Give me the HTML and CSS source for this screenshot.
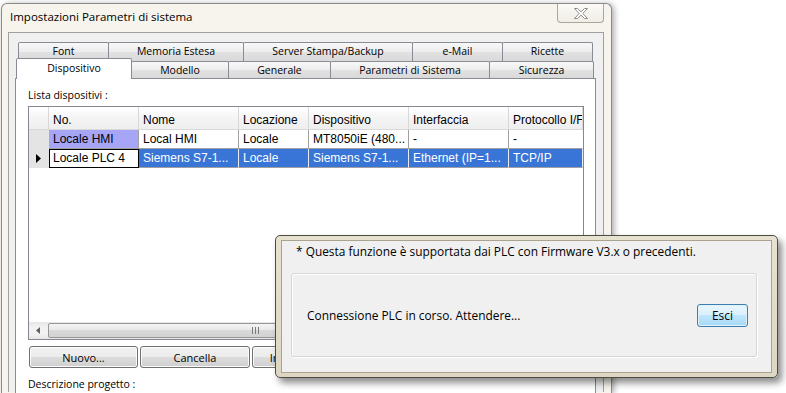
FILE: index.html
```html
<!DOCTYPE html>
<html lang="it">
<head>
  <meta charset="UTF-8">
  <title>Impostazioni Parametri di sistema</title>
  <link rel="stylesheet" href="styles.css">
</head>
<body>

  <div class="window">
    <div class="titlebar">
      <span class="title">Impostazioni Parametri di sistema</span>
      <div class="close">
        <svg width="14" height="11" viewBox="0 0 14 11">
          <polygon points="0.5,0.5 3.5,0.5 7,3.8 10.5,0.5 13.5,0.5 8.8,5.5 13.5,10.5 10.5,10.5 7,7.2 3.5,10.5 0.5,10.5 5.2,5.5" fill="#fff" stroke="#8c8c8c" stroke-width="1"/>
        </svg>
      </div>
    </div>

    <div class="client">
      <div class="tabctl">
        <div class="tabrow back">
          <div class="tab" style="width:91px">Font</div>
          <div class="tab" style="width:136px">Memoria Estesa</div>
          <div class="tab" style="width:170px">Server Stampa/Backup</div>
          <div class="tab" style="width:91px">e-Mail</div>
          <div class="tab" style="width:91px">Ricette</div>
        </div>
        <div class="tabrow front">
          <div class="tab sel" style="width:116px">Dispositivo</div>
          <div class="tab" style="width:98px">Modello</div>
          <div class="tab" style="width:103px">Generale</div>
          <div class="tab" style="width:160px">Parametri di Sistema</div>
          <div class="tab" style="width:105px">Sicurezza</div>
        </div>

        <div class="panel">
          <div class="label">Lista dispositivi :</div>

          <div class="grid">
            <div class="row head">
              <div class="cell rh"></div>
              <div class="cell">No.</div>
              <div class="cell">Nome</div>
              <div class="cell">Locazione</div>
              <div class="cell">Dispositivo</div>
              <div class="cell">Interfaccia</div>
              <div class="cell last">Protocollo I/F</div>
            </div>
            <div class="row">
              <div class="cell rh"></div>
              <div class="cell hmi">Locale HMI</div>
              <div class="cell">Local HMI</div>
              <div class="cell">Locale</div>
              <div class="cell">MT8050iE (480...</div>
              <div class="cell">-</div>
              <div class="cell last">-</div>
            </div>
            <div class="row selected">
              <div class="cell rh">
                <svg width="5" height="9" viewBox="0 0 5 9"><polygon points="0,0 5,4.5 0,9" fill="#000"/></svg>
              </div>
              <div class="cell current">Locale PLC 4</div>
              <div class="cell">Siemens S7-1...</div>
              <div class="cell">Locale</div>
              <div class="cell">Siemens S7-1...</div>
              <div class="cell">Ethernet (IP=1...</div>
              <div class="cell last">TCP/IP</div>
            </div>
            <div class="empty"></div>
            <div class="hscroll">
              <div class="arrow">
                <svg width="4" height="7" viewBox="0 0 4 7"><polygon points="4,0 0,3.5 4,7" fill="#606060"/></svg>
              </div>
              <div class="thumb">
                <svg width="7" height="7" viewBox="0 0 7 7">
                  <rect x="0" y="0" width="1" height="7" fill="#7a7a7a"/>
                  <rect x="3" y="0" width="1" height="7" fill="#7a7a7a"/>
                  <rect x="6" y="0" width="1" height="7" fill="#7a7a7a"/>
                </svg>
              </div>
            </div>
          </div>

          <div class="buttons">
            <button class="btn" style="width:109px">Nuovo...</button>
            <button class="btn" style="width:110px">Cancella</button>
            <button class="btn" style="width:110px">Impostazioni...</button>
            <button class="btn" style="width:110px">Copia</button>
          </div>

          <div class="label desc">Descrizione progetto :</div>
        </div>
      </div>
    </div>
  </div>

  <div class="dialog">
    <div class="dlg-client">
      <div class="note">* Questa funzione è supportata dai PLC con Firmware V3.x o precedenti.</div>
      <div class="group">
        <span>Connessione PLC in corso. Attendere...</span>
        <button class="btn default">Esci</button>
      </div>
    </div>
  </div>

</body>
</html>
```

FILE: styles.css
```css
body {
  margin: 0;
  width: 786px;
  height: 393px;
  overflow: hidden;
  position: relative;
  background: #fff;
  font-family: "Open Sans", sans-serif;
  font-size: 11.5px;
  color: #000;
}

/* main window */
.window {
  box-sizing: border-box;
  margin: 3px 0 0 1px;
  width: 611px;
  height: 390px;
  overflow: hidden;
  padding: 0 7px 0 6px;
  border: 1px solid #8a8a8a;
  border-bottom: none;
  border-radius: 6px 6px 0 0;
  background: #f6f4ec;
  box-shadow: 2px 1px 6px rgba(0, 0, 0, 0.35);
}
.titlebar {
  height: 28px;
  display: flex;
  justify-content: space-between;
  align-items: flex-start;
}
.title {
  margin: 5px 0 0 2px;
  line-height: 16px;
}
.close {
  box-sizing: border-box;
  width: 47px;
  height: 19px;
  display: flex;
  align-items: center;
  justify-content: center;
  border: 1px solid #aaa89e;
  border-top: none;
  border-radius: 0 0 4px 4px;
  background: linear-gradient(#fbfaf6, #efede4);
}
.client {
  height: 350px;
  padding: 9px 0 0 6px;
  border: 1px solid #a0a0a0;
  border-bottom: none;
  background: #f0f0f0;
  font-size: 10.5px;
}

/* tabs */
.tabctl {
  width: 581px;
}
.tabrow {
  display: flex;
  height: 19px;
}
.back {
  padding-left: 3px;
}
.front {
  position: relative;
  padding-left: 1px;
  margin-top: -3px;
  height: 20px;
  align-items: flex-end;
}
.tab {
  box-sizing: border-box;
  height: 19px;
  margin-left: -1px;
  border: 1px solid #898c95;
  border-bottom: none;
  border-radius: 2px 2px 0 0;
  background: linear-gradient(#f8f8f8, #ececec 50%, #e2e2e2 50%, #d9d9d9);
  text-align: center;
  line-height: 17px;
  white-space: nowrap;
}
.tab:first-child {
  margin-left: 0;
}
.front .tab {
  height: 17px;
  line-height: 16px;
}
.front .tab.sel {
  position: relative;
  z-index: 2;
  height: 21px;
  margin-bottom: -1px;
  line-height: 18px;
  background: #fff;
}
.panel {
  height: 314px;
  padding: 0 10px 0 12px;
  border: 1px solid #898c95;
  border-bottom: none;
  background: #fff;
}
.label {
  margin-top: 8px;
  line-height: 16px;
}

/* device grid */
.grid {
  box-sizing: border-box;
  margin-top: 3px;
  width: 556px;
  height: 234px;
  display: flex;
  flex-direction: column;
  border: 1px solid #828790;
  font-family: "Liberation Sans", Arial, sans-serif;
  font-size: 12px;
}
.row {
  display: grid;
  grid-template-columns: 20px 90px 100px 70px 100px 100px 74px;
  height: 19px;
}
.cell {
  box-sizing: border-box;
  padding-left: 4px;
  line-height: 19px;
  border-right: 1px solid #a0a0a0;
  border-bottom: 1px solid #a0a0a0;
  white-space: nowrap;
  overflow: hidden;
}
.cell.last {
  border-right: 1px solid #fff;
}
.cell.rh {
  padding: 0;
  display: flex;
  align-items: center;
  justify-content: center;
  background: #e4e4e4;
  border-color: #e4e4e4;
}
.row.head {
  height: 23px;
  background: linear-gradient(#ffffff, #f4f4f4 50%, #eeeeee);
}
.row.head .cell {
  padding-top: 5px;
  line-height: 17px;
  border-color: #d8d8d8;
}
.row.head .cell.rh {
  background: none;
}
.cell.hmi {
  background: #a7a6f6;
}
.row.selected .cell {
  background: #3875d7;
  color: #fff;
  border-right-color: #e8ecf4;
  border-bottom-color: #a0a0a0;
}
.row.selected .cell.rh {
  background: #e4e4e4;
  border-color: #e4e4e4;
}
.row.selected .cell.current {
  background: #fff;
  color: #000;
  padding-left: 3px;
  line-height: 17px;
  border: 1px solid #000;
}
.empty {
  flex: 1;
}
.hscroll {
  height: 17px;
  display: flex;
  align-items: center;
  background: linear-gradient(#e6e6e6, #f2f2f2 30%, #f2f2f2 70%, #e6e6e6);
}
.arrow {
  width: 17px;
  height: 17px;
  display: flex;
  align-items: center;
  justify-content: center;
}
.thumb {
  box-sizing: border-box;
  margin-left: 2px;
  width: 414px;
  height: 15px;
  display: flex;
  align-items: center;
  justify-content: center;
  border: 1px solid #979797;
  border-radius: 2px;
  background: linear-gradient(#f4f4f4, #e8e8e8 50%, #d9d9d9 50%, #d2d2d2);
}

/* buttons */
.buttons {
  display: flex;
  gap: 2px;
  margin: 6px 0 0 1px;
}
.btn {
  box-sizing: border-box;
  height: 22px;
  padding: 0;
  border: 1px solid #707070;
  border-radius: 3px;
  background: linear-gradient(#f2f2f2, #ebebeb 50%, #dddddd 50%, #cfcfcf);
  box-shadow: inset 0 0 0 1px #fbfbfb;
  font-family: "Open Sans", sans-serif;
  font-size: 11px;
  color: #000;
  white-space: nowrap;
  overflow: hidden;
}
.label.desc {
  margin-top: 8px;
}

/* connection dialog */
.dialog {
  position: absolute;
  left: 275px;
  top: 235px;
  box-sizing: border-box;
  width: 503px;
  height: 143px;
  padding: 4px 5px;
  border: 1px solid #4e4b42;
  border-radius: 5px;
  background: linear-gradient(#e7e1cf, #ddd6c2);
  box-shadow: 4px 5px 7px rgba(0, 0, 0, 0.45);
  font-size: 11.9px;
}
.dlg-client {
  box-sizing: border-box;
  height: 133px;
  padding-top: 2px;
  border: 1px solid #aaa38f;
  background: #f0f0f0;
}
.note {
  padding-left: 14px;
  line-height: 16px;
}
.group {
  box-sizing: border-box;
  margin: 14px 0 0 9px;
  width: 466px;
  height: 84px;
  display: flex;
  align-items: center;
  justify-content: space-between;
  padding: 0 8px 0 15px;
  border: 1px solid #d5d5d5;
  border-radius: 3px;
  box-shadow: inset 1px 1px 0 #fff, 1px 1px 0 #fff;
}
.btn.default {
  width: 51px;
  height: 23px;
  border-color: #3c7fb1;
  background: linear-gradient(#eaf6fd, #d9f0fc 50%, #bee6fd 50%, #a7d9f5);
  box-shadow: inset 0 0 0 1px #dff2fc;
  font-size: 11.9px;
}
```
